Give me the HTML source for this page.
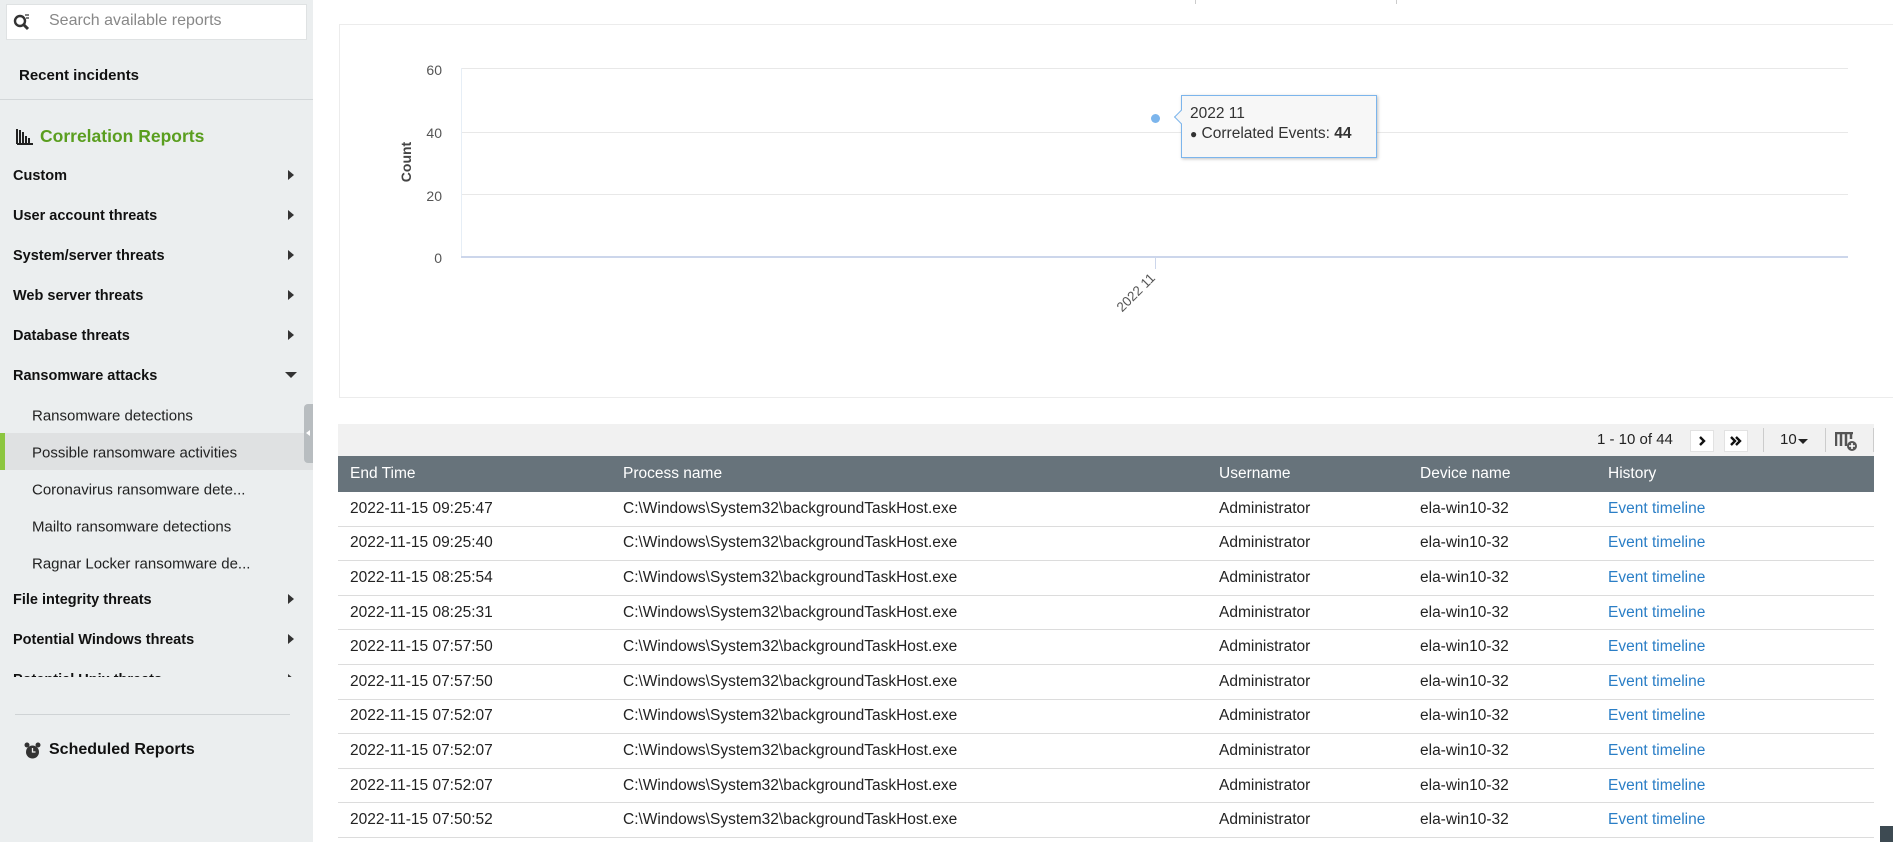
<!DOCTYPE html>
<html><head><meta charset="utf-8"><style>
*{margin:0;padding:0;box-sizing:border-box}
body{width:1893px;height:842px;overflow:hidden;background:#fff;font-family:"Liberation Sans",sans-serif;position:relative;color:#222}
.abs{position:absolute}
#side{left:0;top:0;width:313px;height:842px;background:#ebeeef}
.mi{position:absolute;left:13px;font-weight:bold;font-size:14.5px;color:#111;transform:translateY(-50%)}
.ar{position:absolute;left:288px;width:0;height:0;border-top:5px solid transparent;border-bottom:5px solid transparent;border-left:6px solid #333;transform:translateY(-50%)}
.si{position:absolute;left:32px;font-size:15px;color:#222;transform:translateY(-50%);white-space:nowrap}
.row{position:absolute;left:338px;width:1536px;height:34.6px;border-bottom:1px solid #dcdcdc;font-size:15.5px;color:#222}
.row span,.hdr span{position:absolute;top:50%;transform:translateY(-50%);white-space:nowrap}
.c1{left:12px}.c2{left:285px}.c3{left:881px}.c4{left:1082px}.c5{left:1270px}
.lnk{color:#2a7ec6}
.gl{position:absolute;left:461px;width:1387px;height:1px;background:#e8e8e8}
.yl{position:absolute;width:30px;text-align:right;left:412px;font-size:14px;color:#555;transform:translateY(-50%)}
.btn{position:absolute;top:430px;width:24px;height:22px;background:#fff;border:1px solid #e2e2e2}
</style></head><body>
<div id="side" class="abs">
  <div class="abs" style="left:6px;top:4px;width:301px;height:36px;background:#fff;border:1px solid #dfe2e3"></div>
  <svg class="abs" style="left:13px;top:13px" width="18" height="18" viewBox="0 0 18 18"><circle cx="7" cy="8" r="5" fill="none" stroke="#333" stroke-width="2.4"/><path d="M10 11l5 5" stroke="#333" stroke-width="3"/><path d="M12 2h4M13 5h3" stroke="#333" stroke-width="1.2"/></svg>
  <div class="abs" style="left:49px;top:12px;font-size:16px;color:#888">Search available reports</div>
  <div class="abs" style="left:19px;top:67px;font-size:15px;font-weight:bold;color:#111">Recent incidents</div>
  <div class="abs" style="left:0;top:99px;width:313px;height:1px;background:#d3d7d9"></div>
  <svg class="abs" style="left:16px;top:129px" width="18" height="16" viewBox="0 0 18 16"><path d="M1 0v15M4 1v14M7 3v12M10 7v8M13 9v6M1 15h16" stroke="#222" stroke-width="2"/></svg>
  <div class="abs" style="left:40px;top:126px;font-size:17.5px;font-weight:bold;color:#5a9e1f">Correlation Reports</div>
  <div class="mi" style="top:176px">Custom</div><div class="ar" style="top:175px"></div>
  <div class="mi" style="top:216px">User account threats</div><div class="ar" style="top:215px"></div>
  <div class="mi" style="top:256px">System/server threats</div><div class="ar" style="top:255px"></div>
  <div class="mi" style="top:296px">Web server threats</div><div class="ar" style="top:295px"></div>
  <div class="mi" style="top:336px">Database threats</div><div class="ar" style="top:335px"></div>
  <div class="mi" style="top:376px">Ransomware attacks</div>
  <div class="abs" style="left:285px;top:372px;border-left:6px solid transparent;border-right:6px solid transparent;border-top:6px solid #333"></div>
  <div class="si" style="top:416px">Ransomware detections</div>
  <div class="abs" style="left:0;top:433px;width:313px;height:37px;background:#dfe1e2"></div>
  <div class="abs" style="left:0;top:433px;width:5px;height:37px;background:#8cc63f"></div>
  <div class="si" style="top:453px">Possible ransomware activities</div>
  <div class="si" style="top:490px">Coronavirus ransomware dete...</div>
  <div class="si" style="top:527px">Mailto ransomware detections</div>
  <div class="si" style="top:564px">Ragnar Locker ransomware de...</div>
  <div class="mi" style="top:600px">File integrity threats</div><div class="ar" style="top:599px"></div>
  <div class="mi" style="top:640px">Potential Windows threats</div><div class="ar" style="top:639px"></div>
  <div class="abs" style="left:0;top:668px;width:313px;height:9px;overflow:hidden"><div class="mi" style="top:12px">Potential Unix threats</div><div class="ar" style="top:11px"></div></div>
  <div class="abs" style="left:15px;top:714px;width:275px;height:1px;background:#cfd3d5"></div>
  <svg class="abs" style="left:24px;top:742px" width="17" height="18" viewBox="0 0 17 18"><circle cx="8.5" cy="10" r="6.5" fill="#333"/><circle cx="3" cy="3" r="2.5" fill="#333"/><circle cx="14" cy="3" r="2.5" fill="#333"/><path d="M8.5 6v4h3" stroke="#eee" stroke-width="1.3" fill="none"/></svg>
  <div class="abs" style="left:49px;top:741px;font-size:16px;font-weight:bold;color:#111">Scheduled Reports</div>
  <div class="abs" style="left:304px;top:404px;width:9px;height:59px;background:#b8bdc0;border-radius:4px 0 0 4px"></div>
  <div class="abs" style="left:306px;top:430px;border-top:3px solid transparent;border-bottom:3px solid transparent;border-right:4px solid #fff"></div>
</div>
<div class="abs" style="left:1195px;top:0;width:1px;height:4px;background:#ccc"></div>
<div class="abs" style="left:1396px;top:0;width:1px;height:4px;background:#ccc"></div>
<!-- chart -->
<div class="abs" style="left:339px;top:24px;width:1560px;height:374px;border:1px solid #ececec"></div>
<div class="gl" style="top:68px"></div><div class="gl" style="top:132px"></div><div class="gl" style="top:194px"></div>
<div class="abs" style="left:461px;top:68px;width:1px;height:190px;background:#e6eef6"></div>
<div class="abs" style="left:461px;top:256px;width:1387px;height:2px;background:#ccd6eb"></div>
<div class="abs" style="left:1155px;top:258px;width:1px;height:11px;background:#ccd6eb"></div>
<div class="yl" style="top:70px">60</div><div class="yl" style="top:133px">40</div><div class="yl" style="top:196px">20</div><div class="yl" style="top:258px">0</div>
<div class="abs" style="left:386px;top:154px;font-size:14px;font-weight:bold;color:#444;transform:rotate(-90deg);transform-origin:center">Count</div>
<div class="abs" style="left:1112px;top:285px;font-size:13.5px;color:#555;transform:rotate(-45deg)">2022 11</div>
<div class="abs" style="left:1151px;top:114px;width:9px;height:9px;border-radius:50%;background:#7cb5ec"></div>
<div class="abs" style="left:1181px;top:95px;width:196px;height:63px;background:#f7f7f7;border:1px solid #7cb5ec;box-shadow:1px 1px 3px rgba(0,0,0,.25)"></div>
<div class="abs" style="left:1176px;top:112px;width:10px;height:10px;background:#f7f7f7;border-left:1px solid #7cb5ec;border-bottom:1px solid #7cb5ec;transform:rotate(45deg)"></div>
<div class="abs" style="left:1190px;top:105px;font-size:15.5px;color:#333">2022 11</div>
<div class="abs" style="left:1190px;top:125px;font-size:15.5px;color:#333"><span style="font-size:12px">●</span> Correlated Events: <b>44</b></div>
<!-- toolbar -->
<div class="abs" style="left:338px;top:424px;width:1536px;height:32px;background:#f1f1f1"></div>
<div class="abs" style="left:1597px;top:431px;font-size:15px;color:#222">1 - 10 of 44</div>
<div class="btn" style="left:1690px"><svg width="22" height="20" viewBox="0 0 22 20"><path d="M9 6l4 4-4 4" stroke="#111" stroke-width="2.4" fill="none"/></svg></div>
<div class="btn" style="left:1724px"><svg width="22" height="20" viewBox="0 0 22 20"><path d="M6 6l4 4-4 4M11 6l4 4-4 4" stroke="#111" stroke-width="2.4" fill="none"/></svg></div>
<div class="abs" style="left:1763px;top:428px;width:1px;height:24px;background:#ccc"></div>
<div class="abs" style="left:1780px;top:431px;font-size:15px;color:#222">10</div>
<div class="abs" style="left:1798px;top:439px;border-left:5px solid transparent;border-right:5px solid transparent;border-top:5px solid #222"></div>
<div class="abs" style="left:1825px;top:428px;width:1px;height:24px;background:#ccc"></div>
<svg class="abs" style="left:1835px;top:432px" width="24" height="20" viewBox="0 0 24 20"><path d="M0 1h18M1 2v12M6 2v12M11 2v12M16 2v5" stroke="#555" stroke-width="2.5" fill="none"/><circle cx="17" cy="14" r="5" fill="#555"/><path d="M14 14h6M17 11v6" stroke="#fff" stroke-width="1.6"/></svg>
<div class="abs" style="left:1873px;top:428px;width:1px;height:24px;background:#ccc"></div>
<!-- table -->
<div class="hdr abs" style="left:338px;top:456px;width:1536px;height:36px;background:#67737b;color:#fff;font-size:15.5px">
<span class="c1">End Time</span><span class="c2">Process name</span><span class="c3">Username</span><span class="c4">Device name</span><span class="c5">History</span></div>
<div class="row" style="top:492px"><span class="c1">2022-11-15 09:25:47</span><span class="c2">C:\Windows\System32\backgroundTaskHost.exe</span><span class="c3">Administrator</span><span class="c4">ela-win10-32</span><span class="c5 lnk">Event timeline</span></div>
<div class="row" style="top:526.6px"><span class="c1">2022-11-15 09:25:40</span><span class="c2">C:\Windows\System32\backgroundTaskHost.exe</span><span class="c3">Administrator</span><span class="c4">ela-win10-32</span><span class="c5 lnk">Event timeline</span></div>
<div class="row" style="top:561.2px"><span class="c1">2022-11-15 08:25:54</span><span class="c2">C:\Windows\System32\backgroundTaskHost.exe</span><span class="c3">Administrator</span><span class="c4">ela-win10-32</span><span class="c5 lnk">Event timeline</span></div>
<div class="row" style="top:595.8px"><span class="c1">2022-11-15 08:25:31</span><span class="c2">C:\Windows\System32\backgroundTaskHost.exe</span><span class="c3">Administrator</span><span class="c4">ela-win10-32</span><span class="c5 lnk">Event timeline</span></div>
<div class="row" style="top:630.4px"><span class="c1">2022-11-15 07:57:50</span><span class="c2">C:\Windows\System32\backgroundTaskHost.exe</span><span class="c3">Administrator</span><span class="c4">ela-win10-32</span><span class="c5 lnk">Event timeline</span></div>
<div class="row" style="top:665px"><span class="c1">2022-11-15 07:57:50</span><span class="c2">C:\Windows\System32\backgroundTaskHost.exe</span><span class="c3">Administrator</span><span class="c4">ela-win10-32</span><span class="c5 lnk">Event timeline</span></div>
<div class="row" style="top:699.6px"><span class="c1">2022-11-15 07:52:07</span><span class="c2">C:\Windows\System32\backgroundTaskHost.exe</span><span class="c3">Administrator</span><span class="c4">ela-win10-32</span><span class="c5 lnk">Event timeline</span></div>
<div class="row" style="top:734.2px"><span class="c1">2022-11-15 07:52:07</span><span class="c2">C:\Windows\System32\backgroundTaskHost.exe</span><span class="c3">Administrator</span><span class="c4">ela-win10-32</span><span class="c5 lnk">Event timeline</span></div>
<div class="row" style="top:768.8px"><span class="c1">2022-11-15 07:52:07</span><span class="c2">C:\Windows\System32\backgroundTaskHost.exe</span><span class="c3">Administrator</span><span class="c4">ela-win10-32</span><span class="c5 lnk">Event timeline</span></div>
<div class="row" style="top:803.4px"><span class="c1">2022-11-15 07:50:52</span><span class="c2">C:\Windows\System32\backgroundTaskHost.exe</span><span class="c3">Administrator</span><span class="c4">ela-win10-32</span><span class="c5 lnk">Event timeline</span></div>
<div class="abs" style="left:1880px;top:826px;width:13px;height:16px;background:#3d4a52"></div>
</body></html>
